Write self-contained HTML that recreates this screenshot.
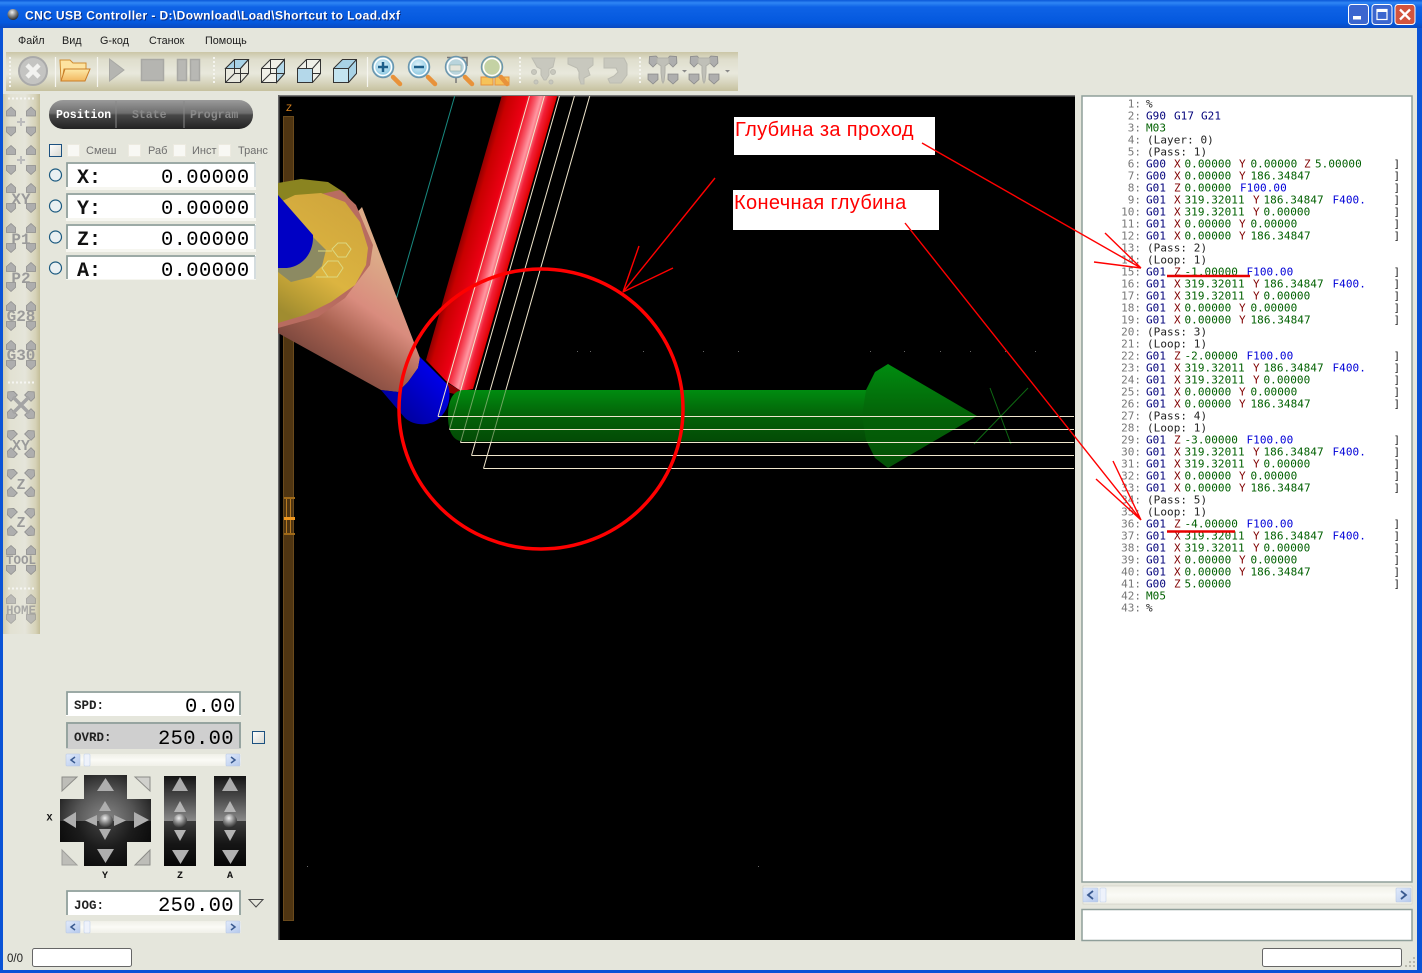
<!DOCTYPE html>
<html><head><meta charset="utf-8"><style>
html,body{margin:0;padding:0;background:#e5e6dc;overflow:hidden}
svg{display:block;position:absolute;left:0;top:0}
text{font-family:"Liberation Sans",sans-serif}
.m{font-size:10.800px;fill:#1c1c1c}
.l{font-size:11px;fill:#6e6e6e}
.code text{font-family:"DejaVu Sans Mono","Liberation Mono",monospace;font-size:11px;letter-spacing:.06px}
.nums text{font-family:"DejaVu Sans Mono","Liberation Mono",monospace;font-size:11px;fill:#777;text-anchor:end}
.g{fill:#00007a}.r{fill:#800000}.v{fill:#006000}.f{fill:#0000d8}.c{fill:#222}
.bk text{font-family:"DejaVu Sans Mono","Liberation Mono",monospace;font-size:11px;fill:#222}
.dro{font-family:"Liberation Mono",monospace;font-size:20.500px;fill:#000;letter-spacing:.35px}
.drl{font-family:"Liberation Mono",monospace;font-size:20px;font-weight:bold;fill:#111}
.sl{font-family:"Liberation Mono",monospace;font-size:12.500px;font-weight:bold;fill:#222}
.tab{font-family:"Liberation Mono",monospace;font-size:11.500px;font-weight:bold}
.anno{font-size:20px;fill:#f00;letter-spacing:.36px}
.ic{font-family:"Liberation Mono",monospace;font-weight:bold;font-size:16px;fill:#9a9a9a;text-anchor:middle}
.pl{font-family:"Liberation Mono",monospace;font-weight:bold;font-size:10px;fill:#111;text-anchor:middle}
</style></head><body>
<svg width="1422" height="973" viewBox="0 0 1422 973" xmlns="http://www.w3.org/2000/svg">
<defs>
<linearGradient id="tb" x1="0" y1="0" x2="0" y2="1"><stop offset="0" stop-color="#0a57d8"/><stop offset=".1" stop-color="#2f86f4"/><stop offset=".25" stop-color="#0f63e6"/><stop offset=".8" stop-color="#0458de"/><stop offset="1" stop-color="#0a49c0"/></linearGradient>
<linearGradient id="tool" x1="0" y1="0" x2="0" y2="1"><stop offset="0" stop-color="#cbc6a6"/><stop offset=".2" stop-color="#dfdecd"/><stop offset=".55" stop-color="#e8e8dc"/><stop offset=".8" stop-color="#d6d3bb"/><stop offset="1" stop-color="#c6c19e"/></linearGradient>
<linearGradient id="side" x1="0" y1="0" x2="1" y2="0"><stop offset="0" stop-color="#cfcbae"/><stop offset=".2" stop-color="#e2e1d2"/><stop offset=".6" stop-color="#e5e5da"/><stop offset=".88" stop-color="#d6d2b8"/><stop offset="1" stop-color="#c3bd98"/></linearGradient>
<linearGradient id="pill" x1="0" y1="0" x2="0" y2="1"><stop offset="0" stop-color="#9a9a9a"/><stop offset=".45" stop-color="#6e6e6e"/><stop offset=".52" stop-color="#484848"/><stop offset="1" stop-color="#222"/></linearGradient>
<linearGradient id="boxg" x1="0" y1="0" x2="1" y2="1"><stop offset="0" stop-color="#fff"/><stop offset="1" stop-color="#d8d8d0"/></linearGradient>
<radialGradient id="padT" gradientUnits="userSpaceOnUse" cx="105" cy="821" r="55"><stop offset="0" stop-color="#8a8a8a"/><stop offset=".55" stop-color="#555"/><stop offset="1" stop-color="#1a1a1a"/></radialGradient>
<radialGradient id="padB" gradientUnits="userSpaceOnUse" cx="105" cy="821" r="55"><stop offset="0" stop-color="#444"/><stop offset=".5" stop-color="#1c1c1c"/><stop offset="1" stop-color="#080808"/></radialGradient>
<linearGradient id="vT" gradientUnits="userSpaceOnUse" x1="0" y1="-45" x2="0" y2="0"><stop offset="0" stop-color="#141414"/><stop offset=".5" stop-color="#4c4c4c"/><stop offset="1" stop-color="#8a8a8a"/></linearGradient>
<linearGradient id="vB" gradientUnits="userSpaceOnUse" x1="0" y1="0" x2="0" y2="45"><stop offset="0" stop-color="#3c3c3c"/><stop offset=".5" stop-color="#161616"/><stop offset="1" stop-color="#060606"/></linearGradient>
<radialGradient id="ball" cx=".42" cy=".3" r=".7"><stop offset="0" stop-color="#f0f0f0"/><stop offset=".5" stop-color="#888"/><stop offset="1" stop-color="#2a2a2a"/></radialGradient>
<linearGradient id="redc" gradientUnits="userSpaceOnUse" x1="502" y1="95" x2="553" y2="109.600"><stop offset="0" stop-color="#900000"/><stop offset=".12" stop-color="#c80000"/><stop offset=".45" stop-color="#ec0014"/><stop offset=".62" stop-color="#f85868"/><stop offset=".72" stop-color="#ff98a2"/><stop offset=".85" stop-color="#f22038"/><stop offset="1" stop-color="#e00000"/></linearGradient>
<linearGradient id="cone" gradientUnits="userSpaceOnUse" x1="395" y1="268" x2="325" y2="368"><stop offset="0" stop-color="#dcab88"/><stop offset=".4" stop-color="#d98c7e"/><stop offset=".7" stop-color="#a6604f"/><stop offset="1" stop-color="#7c483e"/></linearGradient>
<linearGradient id="yel" x1=".7" y1="0" x2=".25" y2="1"><stop offset="0" stop-color="#cfa53c"/><stop offset=".6" stop-color="#dcb440"/><stop offset=".85" stop-color="#b89c34"/><stop offset="1" stop-color="#a08c30"/></linearGradient>
<linearGradient id="blu" gradientUnits="userSpaceOnUse" x1="434" y1="372" x2="396" y2="410"><stop offset="0" stop-color="#0000e8"/><stop offset="1" stop-color="#0000a0"/></linearGradient>
<linearGradient id="grn" x1="0" y1="0" x2="0" y2="1"><stop offset="0" stop-color="#008c10"/><stop offset=".5" stop-color="#046208"/><stop offset="1" stop-color="#034a06"/></linearGradient>
<linearGradient id="grn2" gradientUnits="userSpaceOnUse" x1="0" y1="364" x2="0" y2="468"><stop offset="0" stop-color="#008c10"/><stop offset=".5" stop-color="#046208"/><stop offset="1" stop-color="#045006"/></linearGradient>
<linearGradient id="sb" x1="0" y1="0" x2="0" y2="1"><stop offset="0" stop-color="#f0f0e8"/><stop offset=".5" stop-color="#fbfbf6"/><stop offset="1" stop-color="#f0f0e8"/></linearGradient>
<linearGradient id="sbb" x1="0" y1="0" x2="1" y2="1"><stop offset="0" stop-color="#e2ebfb"/><stop offset="1" stop-color="#b4c8ec"/></linearGradient>
<radialGradient id="lens" cx=".45" cy=".4" r=".6"><stop offset="0" stop-color="#dff2fb"/><stop offset="1" stop-color="#7cc0dc"/></radialGradient>
<linearGradient id="fold" x1="0" y1="0" x2="0" y2="1"><stop offset="0" stop-color="#fde9a8"/><stop offset="1" stop-color="#f2b860"/></linearGradient>
<clipPath id="vp"><rect x="278" y="96" width="797" height="844"/></clipPath>
<g id="pent"><path d="M-4.500 -.5L0 -4.500L4.500 -.5V4.500H-4.500Z" fill="#aeaeae" stroke="#8e8e8e" stroke-width=".8"/></g>
<g id="arr4"><use href="#pent" x="-10" y="-10"/><use href="#pent" x="10" y="-10"/><use href="#pent" transform="translate(-10 10) rotate(180)"/><use href="#pent" transform="translate(10 10) rotate(180)"/></g>
<g id="arrX"><use href="#pent" transform="translate(-10 -10) rotate(-45)"/><use href="#pent" transform="translate(10 -10) rotate(45)"/><use href="#pent" transform="translate(-10 10) rotate(-135)"/><use href="#pent" transform="translate(10 10) rotate(135)"/></g>
<g id="sbh"><rect x="0" y="0" width="175" height="12" fill="url(#sb)"/><rect x="0" y="0" width="14" height="12" rx="1" fill="url(#sbb)" stroke="#b8c8e4" stroke-width=".6"/><path d="M9 3L5 6L9 9" fill="none" stroke="#3a5a90" stroke-width="1.500"/><rect x="18" y="0" width="6" height="12" rx="1" fill="#eef2fb" stroke="#c2d0ea" stroke-width=".6"/><rect x="160" y="0" width="14" height="12" rx="1" fill="url(#sbb)" stroke="#b8c8e4" stroke-width=".6"/><path d="M165 3L169 6L165 9" fill="none" stroke="#3a5a90" stroke-width="1.500"/></g>
<g id="vpad"><rect x="-16" y="-45" width="32" height="45" fill="url(#vT)"/><rect x="-16" y="0" width="32" height="45" fill="url(#vB)"/><path d="M-8 -30H8L0 -44Z" fill="#aaa"/><path d="M-8 29H9L.5 43Z" fill="#b0b0b0"/><path d="M-6 -9H6L0 -20Z" fill="#b4b4b4"/><path d="M-6 9H6L0 20Z" fill="#b4b4b4"/><circle r="7" fill="url(#ball)"/></g>
<g id="spin"><use href="#pent" transform="translate(5 5) rotate(-45) scale(1.100)"/><use href="#pent" transform="translate(25 5) rotate(45) scale(1.100)"/><use href="#pent" transform="translate(5 24) rotate(180) scale(1.100)"/><use href="#pent" transform="translate(25 24) rotate(180) scale(1.100)"/><path d="M9 3H21V8L17 11V18L16 26L15 28L14 26L13 18V11L9 8Z" fill="#c0c0b8" stroke="#b0b0a8"/></g>
</defs>

<!-- window frame -->
<rect x="0" y="0" width="1422" height="973" fill="#0a53d6"/>
<rect x="0" y="0" width="1422" height="28" fill="url(#tb)"/>
<rect x="3" y="28" width="1414" height="942" fill="#e5e6dc"/>
<circle cx="13" cy="14.500" r="5.500" fill="url(#ball)"/>
<text x="25" y="19.500" font-size="12" font-weight="bold" fill="#0a2c80" transform="translate(1 1)" textLength="375">CNC USB Controller - D:\Download\Load\Shortcut to Load.dxf</text>
<text x="25" y="19.500" font-size="12" font-weight="bold" fill="#fff" textLength="375">CNC USB Controller - D:\Download\Load\Shortcut to Load.dxf</text>
<g stroke="#fff" stroke-width="1">
<rect x="1348.500" y="4.500" width="20" height="20" rx="3" fill="#3b66cf"/>
<rect x="1372" y="4.500" width="20" height="20" rx="3" fill="#3b66cf"/>
<rect x="1395" y="4.500" width="20" height="20" rx="3" fill="#d2543e"/>
</g>
<rect x="1353" y="16" width="8" height="3.500" fill="#fff"/>
<rect x="1377" y="9.500" width="10" height="10" fill="none" stroke="#fff" stroke-width="1.200"/><rect x="1377" y="9" width="10" height="3" fill="#fff"/>
<path d="M1400 9.500L1410 19.500M1410 9.500L1400 19.500" stroke="#fff" stroke-width="2.300"/>

<!-- menu -->
<text class="m" x="18" y="44">Файл</text><text class="m" x="62" y="44">Вид</text><text class="m" x="100" y="44">G-код</text><text class="m" x="149" y="44">Станок</text><text class="m" x="205" y="44">Помощь</text>

<!-- top toolbar -->
<rect x="6" y="52" width="732" height="39" fill="url(#tool)"/>
<path d="M10 57v30M214 57v26M520 57v26M640 57v26" stroke="#f4f4ee" stroke-width="2" stroke-dasharray="2 2"/>
<path d="M55.500 57v30M97.500 57v30M367.500 57v30" stroke="#f6f6f0" stroke-width="1.200"/>
<circle cx="33" cy="71" r="14" fill="#c4c4c2" stroke="#aaa" stroke-width="2"/>
<path d="M27 65L39 77M39 65L27 77" stroke="#f2f2f0" stroke-width="4.500"/>
<path d="M60 60h10l3 3h13v6H64l-2 12h-1z" fill="#fde3a0" stroke="#d08c30"/>
<path d="M61 81L65 69H90L85 81Z" fill="url(#fold)" stroke="#c97d28"/>
<path d="M109.500 59L124 70L109.500 81Z" fill="#b5b5b1" stroke="#a8a8a4"/>
<rect x="141.500" y="59.500" width="22" height="21" fill="#b5b5b1" stroke="#a8a8a4" stroke-width="1.500"/>
<rect x="177.500" y="59.500" width="9" height="21" fill="#b8b8b4" stroke="#a8a8a4" stroke-width="1.500"/>
<rect x="190.500" y="59.500" width="9" height="21" fill="#b8b8b4" stroke="#a8a8a4" stroke-width="1.500"/>
<!-- cubes -->
<g stroke="#333" stroke-width="1" fill="none">
<path d="M225.500 68.500L234.500 59.500H248.500V73.500L240.500 82.500H225.500Z" fill="#e8e8de"/><path d="M225.500 68.500L234.500 59.500H248.500L240.500 68.500Z" fill="#a8d2e6"/><path d="M225.500 68.500H240.500V82.500M240.500 68.500L248.500 59.500M234.500 59.500V73.500H248.500M234.500 73.500L225.500 82.500" />
<path d="M261.500 68.500L270.500 59.500H284.500V73.500L276.500 82.500H261.500Z" fill="#f0f0e8"/><path d="M276.500 68.500L284.500 59.500V73.500L276.500 82.500Z" fill="#b4d8ea"/><path d="M261.500 68.500H276.500V82.500M276.500 68.500L284.500 59.500M270.500 59.500V73.500H284.500M270.500 73.500L261.500 82.500"/>
<path d="M297.500 68.500L306.500 59.500H320.500V73.500L312.500 82.500H297.500Z" fill="#f0f0e8"/><path d="M297.500 68.500H312.500V82.500H297.500Z" fill="#b4d8ea"/><path d="M312.500 68.500L320.500 59.500M306.500 59.500V68.500M312.500 73.500H320.500"/>
<path d="M333.500 68.500L342.500 59.500H356.500V73.500L348.500 82.500H333.500Z" fill="#a8d2e6"/><path d="M333.500 68.500H348.500V82.500H333.500Z" fill="#c4e4f0"/><path d="M348.500 68.500L356.500 59.500"/>
</g>
<!-- magnifiers -->
<g>
<path d="M393 77L400 84" stroke="#e8923a" stroke-width="4.500" stroke-linecap="round"/>
<circle cx="383" cy="67" r="10.500" fill="url(#lens)" stroke="#6b95ad" stroke-width="1.500"/><circle cx="383" cy="67" r="8.500" fill="none" stroke="#fff" stroke-width="1.500"/>
<path d="M378 67H388M383 62V72" stroke="#1d5f8a" stroke-width="2.500"/>
<path d="M428 77L435 84" stroke="#e8923a" stroke-width="4.500" stroke-linecap="round"/>
<circle cx="419" cy="67" r="10.500" fill="url(#lens)" stroke="#6b95ad" stroke-width="1.500"/><circle cx="419" cy="67" r="8.500" fill="none" stroke="#fff" stroke-width="1.500"/>
<path d="M414 67H424" stroke="#1d5f8a" stroke-width="2.500"/>
<path d="M447 57.500H467V66M456 78V83" stroke="#777" stroke-width="1.500" fill="none"/>
<path d="M465 77L472 84" stroke="#e8923a" stroke-width="4.500" stroke-linecap="round"/>
<circle cx="456" cy="67" r="10.500" fill="#b9d4dc" stroke="#6b95ad" stroke-width="1.500"/><circle cx="456" cy="67" r="8.500" fill="none" stroke="#fff" stroke-width="1.500"/>
<rect x="450" y="65" width="11" height="6" fill="#e5e5da" stroke="#8aa" stroke-width=".6"/>
<rect x="481" y="77" width="12" height="8" fill="#f6c35a" stroke="#e8923a"/><rect x="495" y="77" width="14" height="8" fill="#f6c35a" stroke="#e8923a"/><rect x="490" y="56" width="6" height="3" fill="#e8923a"/>
<path d="M501 77L507 84" stroke="#e8923a" stroke-width="4.500" stroke-linecap="round"/>
<circle cx="492" cy="67" r="10.500" fill="#c4d2a4" stroke="#6b95ad" stroke-width="1.500"/><circle cx="492" cy="67" r="8.500" fill="none" stroke="#fff" stroke-width="1.500"/>
</g>
<!-- disabled tools -->
<g fill="#c8c8be" stroke="#bcbcb2" stroke-width="1">
<path d="M532 58h23l-2 9-4 2v6l-3 5-2 0-3-5v-6l-4-2z"/><circle cx="534" cy="72" r="2.500"/><circle cx="553" cy="72" r="2.500"/><circle cx="536" cy="82" r="2"/><circle cx="551" cy="82" r="2"/>
<path d="M568 58h25v7l-5 4 2 6-6 3v6h-3l-2-6v-6l-2-4-9-4z"/>
<path d="M604 58h20l3 6v11l-6 8h-11l-2-4 6-3 4-4-2-4h-12z"/>
</g>
<use href="#spin" x="648" y="55"/>
<use href="#spin" x="689" y="55"/>
<path d="M682 70h5l-2.500 2.500zM725 70h5l-2.500 2.500z" fill="#888"/>

<!-- left vertical toolbar -->
<rect x="3" y="94" width="37" height="540" fill="url(#side)"/>
<path d="M8 98.500H34M8 382.500H34M8 588.500H34" stroke="#f6f6f2" stroke-width="2" stroke-dasharray="2 2"/>
<use href="#arr4" x="21" y="121.500"/><path d="M17 122h8M21 118v8" stroke="#bbb" stroke-width="2"/>
<use href="#arr4" x="21" y="160"/><path d="M17 160h8M21 156v8" stroke="#bbb" stroke-width="2"/>
<use href="#arr4" x="21" y="198"/><text class="ic" x="21" y="204">XY</text>
<use href="#arr4" x="21" y="238"/><text class="ic" x="21" y="244">P1</text>
<use href="#arr4" x="21" y="277"/><text class="ic" x="21" y="283">P2</text>
<use href="#arr4" x="21" y="316"/><text class="ic" x="21" y="321">G28</text>
<use href="#arr4" x="21" y="355"/><text class="ic" x="21" y="360">G30</text>
<use href="#arrX" x="21" y="405"/><path d="M13 397L29 413M29 397L13 413" stroke="#a4a4a4" stroke-width="3.500"/>
<use href="#arrX" x="21" y="444"/><text class="ic" x="21" y="450" style="font-size:15px">XY</text>
<use href="#arrX" x="21" y="483"/><text class="ic" x="21" y="489" style="font-size:15px">Z</text>
<use href="#arrX" x="21" y="522"/><text class="ic" x="21" y="527" style="font-size:15px">Z</text>
<use href="#arr4" x="21" y="560"/><text class="ic" x="21" y="564" style="font-size:12.500px">TOOL</text>
<use href="#arr4" x="21" y="609" opacity=".75"/><text class="ic" x="21" y="614" style="font-size:12.500px" opacity=".8">HOME</text>

<!-- tabs -->
<rect x="49" y="100" width="204" height="29" rx="14" fill="url(#pill)"/>
<path d="M116 101v27M184 101v27" stroke="#888" stroke-width="1"/>
<text class="tab" x="56" y="118" fill="#fff">Position</text>
<text class="tab" x="132" y="118" fill="#8a8a8a">State</text>
<text class="tab" x="190" y="118" fill="#8a8a8a">Program</text>

<!-- checks -->
<rect x="49.500" y="144.500" width="12" height="12" fill="url(#boxg)" stroke="#1c5180"/>
<g fill="#f8f8f4" stroke="#eceae0"><rect x="67.500" y="144.500" width="12" height="12"/><rect x="128.500" y="144.500" width="12" height="12"/><rect x="173.500" y="144.500" width="12" height="12"/><rect x="218.500" y="144.500" width="12" height="12"/></g>
<text class="l" x="86" y="154">Смеш</text><text class="l" x="148" y="154">Раб</text><text class="l" x="192" y="154">Инст</text><text class="l" x="238" y="154">Транс</text>

<!-- DRO -->
<g fill="#eaf0f2" stroke="#1c5a80" stroke-width="1.200"><circle cx="55.500" cy="175" r="6"/><circle cx="55.500" cy="206" r="6"/><circle cx="55.500" cy="237" r="6"/><circle cx="55.500" cy="268" r="6"/></g>
<g>
<rect x="66" y="162" width="190" height="28" fill="#f6f6f0"/><rect x="66" y="162" width="190" height="25" fill="#fff"/><path d="M67 187V163H255" fill="none" stroke="#8f9f9a" stroke-width="1.800"/><path d="M255 163V187" stroke="#a8b8bc"/>
<rect x="66" y="193" width="190" height="28" fill="#f6f6f0"/><rect x="66" y="193" width="190" height="25" fill="#fff"/><path d="M67 218V194H255" fill="none" stroke="#8f9f9a" stroke-width="1.800"/><path d="M255 194V218" stroke="#a8b8bc"/>
<rect x="66" y="224" width="190" height="28" fill="#f6f6f0"/><rect x="66" y="224" width="190" height="25" fill="#fff"/><path d="M67 249V225H255" fill="none" stroke="#8f9f9a" stroke-width="1.800"/><path d="M255 225V249" stroke="#a8b8bc"/>
<rect x="66" y="255" width="190" height="25" fill="#f6f6f0"/><rect x="66" y="255" width="190" height="24" fill="#fff"/><path d="M67 279V256H255" fill="none" stroke="#8f9f9a" stroke-width="1.800"/><path d="M255 256V279" stroke="#a8b8bc"/>
</g>
<text class="drl" x="77" y="183">X:</text><text class="dro" x="161" y="183">0.00000</text>
<text class="drl" x="77" y="214">Y:</text><text class="dro" x="161" y="214">0.00000</text>
<text class="drl" x="77" y="245">Z:</text><text class="dro" x="161" y="245">0.00000</text>
<text class="drl" x="77" y="276">A:</text><text class="dro" x="161" y="276">0.00000</text>

<!-- speed -->
<rect x="66" y="691" width="175" height="25" fill="#fff"/><path d="M67 715V692H240V715" fill="none" stroke="#8f9f9a" stroke-width="1.800"/>
<text class="sl" x="74" y="709">SPD:</text><text class="dro" x="185" y="712">0.00</text>
<rect x="66" y="722" width="175" height="27" fill="#cfcfcf"/><path d="M67 748V723H240V748" fill="none" stroke="#8f9f9a" stroke-width="1.800"/>
<text class="sl" x="74" y="741">OVRD:</text><text class="dro" x="158" y="744">250.00</text>
<rect x="252.500" y="731.500" width="12" height="12" fill="url(#boxg)" stroke="#1c5180"/>
<use href="#sbh" x="66" y="754"/>

<!-- jog pad -->
<path d="M84 775H127V799H151V821H60V799H84Z" fill="url(#padT)"/>
<path d="M60 821H151V842H127V866H84V842H60Z" fill="url(#padB)"/>
<g fill="#aeaeae">
<path d="M97 791H114L105.500 778Z"/><path d="M97 849H114L105.500 863Z"/><path d="M76 812V828L63 820Z"/><path d="M134 812V828L149 820Z"/>
<path d="M99 811H111L105 801Z"/><path d="M99 829H111L105 840Z"/><path d="M97 815V826L85 820.500Z"/><path d="M114 815V826L126 820.500Z"/>
</g>
<circle cx="106" cy="821" r="7" fill="url(#ball)"/>
<path d="M62 777H77L62 791Z" fill="#bdbdb8" stroke="#8c8c88"/><path d="M135 777H150V791Z" fill="#d0d0cc" stroke="#8c8c88"/><path d="M62 850L77 865H62Z" fill="#bdbdb8" stroke="#a0a09c"/><path d="M150 850V865H135Z" fill="#bdbdb8" stroke="#8c8c88"/>
<use href="#vpad" x="180" y="821"/><use href="#vpad" x="230" y="821"/>
<text class="pl" x="49.500" y="820.500">X</text><text class="pl" x="105" y="878">Y</text><text class="pl" x="180" y="878">Z</text><text class="pl" x="230" y="878">A</text>

<rect x="66" y="890" width="175" height="25" fill="#fff"/><path d="M67 915V891H240V915" fill="none" stroke="#8f9f9a" stroke-width="1.800"/>
<text class="sl" x="74" y="909">JOG:</text><text class="dro" x="158" y="911">250.00</text>
<path d="M249 899.500H263L256 907Z" fill="#e5e6dc" stroke="#444"/>
<use href="#sbh" x="66" y="921"/>

<!-- viewport -->
<rect x="278" y="95" width="797" height="845" fill="#000"/>
<rect x="278" y="95" width="797" height="1.500" fill="#777"/>
<rect x="278" y="95" width="1.500" height="845" fill="#666"/>
<g clip-path="url(#vp)">
<text x="286" y="111" font-size="10" fill="#e08820" style="font-family:'Liberation Mono',monospace">Z</text>
<rect x="283.500" y="116.500" width="10" height="804" fill="#4f3512" stroke="#6a4a1c"/>
<path d="M286.500 498V534M290.500 498V534" stroke="#b87a20" stroke-width="1"/>
<rect x="284" y="497" width="11" height="2" fill="#a06a18"/><rect x="284" y="533" width="11" height="2" fill="#a06a18"/>
<rect x="284" y="517" width="11" height="3" fill="#f09820"/>
<path d="M455 95L381 352" stroke="#188a80" stroke-width="1"/>
<!-- red cylinder -->
<path d="M502 95H557.500L473 389L461 391L446 381L426 360Z" fill="url(#redc)"/>
<path d="M446 382L461 391L459 395L446 392Z" fill="#8c0000"/>
<!-- tool -->
<path d="M278 183L301 179L328 182L345 193L354 205L345 225H278Z" fill="#8a8420"/>
<path d="M362 207L420 358L418 368L408 382L398 392L381 390L278 333V300Z" fill="url(#cone)"/>
<path d="M278 203L340 190L356 205L373 245L370 265L345 298L318 317L278 328Z" fill="#b86c60"/>
<path d="M278 203L295 195L321 193L345 202L360 222L368 248L366 265L355 285L331 302L305 315L278 323Z" fill="url(#yel)"/>
<path d="M308 232L326 250L322 266L311 277L291 282L278 272V200Z" fill="#8c8a62"/>
<path d="M278 195L313 235C314 255 300 268 285 268H278Z" fill="#0000c4"/>
<g fill="none" stroke="#dcd880" stroke-width="1"><path d="M332 249L338 243H346L351 249L346 257H338Z"/><path d="M322 268L328 261H338L343 268L337 277H328Z"/><path d="M318 251H332M316 277H328"/></g>
<!-- blue tip -->
<path d="M420 357L448 385C452 398 448 412 437 420C428 426 414 426 405 418L381 390L398 392L408 382L418 368Z" fill="url(#blu)"/>
<!-- wires behind green tips -->
<g fill="none" stroke="#f0e6cc" stroke-width="1">
<path d="M529.700 95L438 416.500"/><path d="M544.700 95L449.500 429.500"/><path d="M559.700 95L460.500 442.500"/>
<path d="M574.700 95L471.500 455.500"/><path d="M590 95L483.500 468.500"/>
</g>
<!-- green -->
<path d="M464 390H868V441.500H464C452 441.500 448 430 448 416C448 402 452 390 464 390Z" fill="url(#grn)"/>
<path d="M866 390L875 372L888 364L977 416L888 468L875 458L866 440L862 416Z" fill="url(#grn2)"/>
<path d="M990 388L1011 444M1028 388L974 444" stroke="#0e6a12" stroke-width="1"/>
<g fill="none" stroke="#c8d0a8" stroke-width="1" opacity=".55">
<path d="M460.700 390L449.500 429.500M475.500 390L460.800 441.500M490.200 390L475.500 441.500M505.900 390L491.200 441.500"/>
</g>
<g fill="none" stroke="#f0e6cc" stroke-width="1">
<path d="M438 416.500H1074M449.500 429.500H1074M460.500 442.500H1074M471.500 455.500H1074M483.500 468.500H1074"/>
</g>
<g fill="#666"><rect x="577" y="351" width="1" height="1"/><rect x="590" y="351" width="1" height="1"/><rect x="643" y="351" width="1" height="1"/><rect x="703" y="351" width="1" height="1"/><rect x="738" y="351" width="1" height="1"/><rect x="870" y="351" width="1" height="1"/><rect x="904" y="351" width="1" height="1"/><rect x="940" y="351" width="1" height="1"/><rect x="970" y="351" width="1" height="1"/><rect x="1005" y="351" width="1" height="1"/><rect x="1035" y="351" width="1" height="1"/><rect x="307" y="866" width="1" height="1"/><rect x="758" y="866" width="1" height="1"/></g>
<ellipse cx="541" cy="409" rx="142" ry="140" fill="none" stroke="#f00" stroke-width="3.500"/>
</g>

<!-- right panel -->
<rect x="1082" y="96" width="330" height="786" fill="#fff" stroke="#8f9f9a" stroke-width="1.500"/>
<rect x="1083" y="886" width="329" height="18" fill="url(#sb)" stroke="#c8c8be" stroke-width=".5"/>
<rect x="1083" y="888" width="15" height="14" rx="1" fill="url(#sbb)" stroke="#b8c8e4" stroke-width=".6"/><path d="M1093 891L1088 895L1093 899" fill="none" stroke="#3a5a90" stroke-width="1.800"/>
<rect x="1100" y="888" width="6" height="14" rx="1" fill="#eef2fb" stroke="#c2d0ea" stroke-width=".6"/>
<rect x="1396" y="888" width="15" height="14" rx="1" fill="url(#sbb)" stroke="#b8c8e4" stroke-width=".6"/><path d="M1401 891L1406 895L1401 899" fill="none" stroke="#3a5a90" stroke-width="1.800"/>
<rect x="1082" y="909.500" width="330" height="31" fill="#fff" stroke="#8f9f9a" stroke-width="1.500"/>

<g class="nums">
<text x="1141" y="107.500">1:</text><text x="1141" y="119.500">2:</text><text x="1141" y="131.500">3:</text><text x="1141" y="143.500">4:</text><text x="1141" y="155.500">5:</text><text x="1141" y="167.500">6:</text><text x="1141" y="179.500">7:</text><text x="1141" y="191.500">8:</text><text x="1141" y="203.500">9:</text><text x="1141" y="215.500">10:</text><text x="1141" y="227.500">11:</text><text x="1141" y="239.500">12:</text><text x="1141" y="251.500">13:</text><text x="1141" y="263.500">14:</text><text x="1141" y="275.500">15:</text><text x="1141" y="287.500">16:</text><text x="1141" y="299.500">17:</text><text x="1141" y="311.500">18:</text><text x="1141" y="323.500">19:</text><text x="1141" y="335.500">20:</text><text x="1141" y="347.500">21:</text><text x="1141" y="359.500">22:</text><text x="1141" y="371.500">23:</text><text x="1141" y="383.500">24:</text><text x="1141" y="395.500">25:</text><text x="1141" y="407.500">26:</text><text x="1141" y="419.500">27:</text><text x="1141" y="431.500">28:</text><text x="1141" y="443.500">29:</text><text x="1141" y="455.500">30:</text><text x="1141" y="467.500">31:</text><text x="1141" y="479.500">32:</text><text x="1141" y="491.500">33:</text><text x="1141" y="503.500">34:</text><text x="1141" y="515.500">35:</text><text x="1141" y="527.500">36:</text><text x="1141" y="539.500">37:</text><text x="1141" y="551.500">38:</text><text x="1141" y="563.500">39:</text><text x="1141" y="575.500">40:</text><text x="1141" y="587.500">41:</text><text x="1141" y="599.500">42:</text><text x="1141" y="611.500">43:</text>
</g>
<g class="code">
<text y="107.500" class="c"><tspan x="1146">%</tspan></text>
<text y="119.500" class="g"><tspan x="1146">G90</tspan><tspan x="1174">G17</tspan><tspan x="1201">G21</tspan></text>
<text y="131.500" class="v"><tspan x="1146">M03</tspan></text>
<text y="143.500" class="c"><tspan x="1147">(Layer: 0)</tspan></text>
<text y="155.500" class="c"><tspan x="1147">(Pass: 1)</tspan></text>
<text y="167.500"><tspan x="1146" class="g">G00</tspan><tspan x="1174" class="r">X</tspan><tspan x="1184.500" class="v">0.00000</tspan><tspan x="1239" class="r">Y</tspan><tspan x="1250.500" class="v">0.00000</tspan><tspan x="1304" class="r">Z</tspan><tspan x="1315" class="v">5.00000</tspan></text>
<text y="179.500"><tspan x="1146" class="g">G00</tspan><tspan x="1174" class="r">X</tspan><tspan x="1184.500" class="v">0.00000</tspan><tspan x="1239" class="r">Y</tspan><tspan x="1250.500" class="v">186.34847</tspan></text>
<text y="191.500"><tspan x="1146" class="g">G01</tspan><tspan x="1174" class="r">Z</tspan><tspan x="1184.500" class="v">0.00000</tspan><tspan x="1240" class="f">F100.00</tspan></text>
<text y="203.500"><tspan x="1146" class="g">G01</tspan><tspan x="1174" class="r">X</tspan><tspan x="1184.500" class="v">319.32011</tspan><tspan x="1253" class="r">Y</tspan><tspan x="1263.500" class="v">186.34847</tspan><tspan x="1332.500" class="f">F400.</tspan></text>
<text y="215.500"><tspan x="1146" class="g">G01</tspan><tspan x="1174" class="r">X</tspan><tspan x="1184.500" class="v">319.32011</tspan><tspan x="1253" class="r">Y</tspan><tspan x="1263.500" class="v">0.00000</tspan></text>
<text y="227.500"><tspan x="1146" class="g">G01</tspan><tspan x="1174" class="r">X</tspan><tspan x="1184.500" class="v">0.00000</tspan><tspan x="1239" class="r">Y</tspan><tspan x="1250.500" class="v">0.00000</tspan></text>
<text y="239.500"><tspan x="1146" class="g">G01</tspan><tspan x="1174" class="r">X</tspan><tspan x="1184.500" class="v">0.00000</tspan><tspan x="1239" class="r">Y</tspan><tspan x="1250.500" class="v">186.34847</tspan></text>
<text y="251.500" class="c"><tspan x="1147">(Pass: 2)</tspan></text>
<text y="263.500" class="c"><tspan x="1147">(Loop: 1)</tspan></text>
<text y="275.500"><tspan x="1146" class="g">G01</tspan><tspan x="1174" class="r">Z</tspan><tspan x="1184.500" class="v">-1.00000</tspan><tspan x="1246.500" class="f">F100.00</tspan></text>
<text y="287.500"><tspan x="1146" class="g">G01</tspan><tspan x="1174" class="r">X</tspan><tspan x="1184.500" class="v">319.32011</tspan><tspan x="1253" class="r">Y</tspan><tspan x="1263.500" class="v">186.34847</tspan><tspan x="1332.500" class="f">F400.</tspan></text>
<text y="299.500"><tspan x="1146" class="g">G01</tspan><tspan x="1174" class="r">X</tspan><tspan x="1184.500" class="v">319.32011</tspan><tspan x="1253" class="r">Y</tspan><tspan x="1263.500" class="v">0.00000</tspan></text>
<text y="311.500"><tspan x="1146" class="g">G01</tspan><tspan x="1174" class="r">X</tspan><tspan x="1184.500" class="v">0.00000</tspan><tspan x="1239" class="r">Y</tspan><tspan x="1250.500" class="v">0.00000</tspan></text>
<text y="323.500"><tspan x="1146" class="g">G01</tspan><tspan x="1174" class="r">X</tspan><tspan x="1184.500" class="v">0.00000</tspan><tspan x="1239" class="r">Y</tspan><tspan x="1250.500" class="v">186.34847</tspan></text>
<text y="335.500" class="c"><tspan x="1147">(Pass: 3)</tspan></text>
<text y="347.500" class="c"><tspan x="1147">(Loop: 1)</tspan></text>
<text y="359.500"><tspan x="1146" class="g">G01</tspan><tspan x="1174" class="r">Z</tspan><tspan x="1184.500" class="v">-2.00000</tspan><tspan x="1246.500" class="f">F100.00</tspan></text>
<text y="371.500"><tspan x="1146" class="g">G01</tspan><tspan x="1174" class="r">X</tspan><tspan x="1184.500" class="v">319.32011</tspan><tspan x="1253" class="r">Y</tspan><tspan x="1263.500" class="v">186.34847</tspan><tspan x="1332.500" class="f">F400.</tspan></text>
<text y="383.500"><tspan x="1146" class="g">G01</tspan><tspan x="1174" class="r">X</tspan><tspan x="1184.500" class="v">319.32011</tspan><tspan x="1253" class="r">Y</tspan><tspan x="1263.500" class="v">0.00000</tspan></text>
<text y="395.500"><tspan x="1146" class="g">G01</tspan><tspan x="1174" class="r">X</tspan><tspan x="1184.500" class="v">0.00000</tspan><tspan x="1239" class="r">Y</tspan><tspan x="1250.500" class="v">0.00000</tspan></text>
<text y="407.500"><tspan x="1146" class="g">G01</tspan><tspan x="1174" class="r">X</tspan><tspan x="1184.500" class="v">0.00000</tspan><tspan x="1239" class="r">Y</tspan><tspan x="1250.500" class="v">186.34847</tspan></text>
<text y="419.500" class="c"><tspan x="1147">(Pass: 4)</tspan></text>
<text y="431.500" class="c"><tspan x="1147">(Loop: 1)</tspan></text>
<text y="443.500"><tspan x="1146" class="g">G01</tspan><tspan x="1174" class="r">Z</tspan><tspan x="1184.500" class="v">-3.00000</tspan><tspan x="1246.500" class="f">F100.00</tspan></text>
<text y="455.500"><tspan x="1146" class="g">G01</tspan><tspan x="1174" class="r">X</tspan><tspan x="1184.500" class="v">319.32011</tspan><tspan x="1253" class="r">Y</tspan><tspan x="1263.500" class="v">186.34847</tspan><tspan x="1332.500" class="f">F400.</tspan></text>
<text y="467.500"><tspan x="1146" class="g">G01</tspan><tspan x="1174" class="r">X</tspan><tspan x="1184.500" class="v">319.32011</tspan><tspan x="1253" class="r">Y</tspan><tspan x="1263.500" class="v">0.00000</tspan></text>
<text y="479.500"><tspan x="1146" class="g">G01</tspan><tspan x="1174" class="r">X</tspan><tspan x="1184.500" class="v">0.00000</tspan><tspan x="1239" class="r">Y</tspan><tspan x="1250.500" class="v">0.00000</tspan></text>
<text y="491.500"><tspan x="1146" class="g">G01</tspan><tspan x="1174" class="r">X</tspan><tspan x="1184.500" class="v">0.00000</tspan><tspan x="1239" class="r">Y</tspan><tspan x="1250.500" class="v">186.34847</tspan></text>
<text y="503.500" class="c"><tspan x="1147">(Pass: 5)</tspan></text>
<text y="515.500" class="c"><tspan x="1147">(Loop: 1)</tspan></text>
<text y="527.500"><tspan x="1146" class="g">G01</tspan><tspan x="1174" class="r">Z</tspan><tspan x="1184.500" class="v">-4.00000</tspan><tspan x="1246.500" class="f">F100.00</tspan></text>
<text y="539.500"><tspan x="1146" class="g">G01</tspan><tspan x="1174" class="r">X</tspan><tspan x="1184.500" class="v">319.32011</tspan><tspan x="1253" class="r">Y</tspan><tspan x="1263.500" class="v">186.34847</tspan><tspan x="1332.500" class="f">F400.</tspan></text>
<text y="551.500"><tspan x="1146" class="g">G01</tspan><tspan x="1174" class="r">X</tspan><tspan x="1184.500" class="v">319.32011</tspan><tspan x="1253" class="r">Y</tspan><tspan x="1263.500" class="v">0.00000</tspan></text>
<text y="563.500"><tspan x="1146" class="g">G01</tspan><tspan x="1174" class="r">X</tspan><tspan x="1184.500" class="v">0.00000</tspan><tspan x="1239" class="r">Y</tspan><tspan x="1250.500" class="v">0.00000</tspan></text>
<text y="575.500"><tspan x="1146" class="g">G01</tspan><tspan x="1174" class="r">X</tspan><tspan x="1184.500" class="v">0.00000</tspan><tspan x="1239" class="r">Y</tspan><tspan x="1250.500" class="v">186.34847</tspan></text>
<text y="587.500"><tspan x="1146" class="g">G00</tspan><tspan x="1174" class="r">Z</tspan><tspan x="1184.500" class="v">5.00000</tspan></text>
<text y="599.500" class="v"><tspan x="1146">M05</tspan></text>
<text y="611.500" class="c"><tspan x="1146">%</tspan></text>
</g>
<g class="bk">
<text x="1393.500" y="167.500">]</text><text x="1393.500" y="179.500">]</text><text x="1393.500" y="191.500">]</text><text x="1393.500" y="203.500">]</text><text x="1393.500" y="215.500">]</text><text x="1393.500" y="227.500">]</text><text x="1393.500" y="239.500">]</text>
<text x="1393.500" y="275.500">]</text><text x="1393.500" y="287.500">]</text><text x="1393.500" y="299.500">]</text><text x="1393.500" y="311.500">]</text><text x="1393.500" y="323.500">]</text>
<text x="1393.500" y="359.500">]</text><text x="1393.500" y="371.500">]</text><text x="1393.500" y="383.500">]</text><text x="1393.500" y="395.500">]</text><text x="1393.500" y="407.500">]</text>
<text x="1393.500" y="443.500">]</text><text x="1393.500" y="455.500">]</text><text x="1393.500" y="467.500">]</text><text x="1393.500" y="479.500">]</text><text x="1393.500" y="491.500">]</text>
<text x="1393.500" y="527.500">]</text><text x="1393.500" y="539.500">]</text><text x="1393.500" y="551.500">]</text><text x="1393.500" y="563.500">]</text><text x="1393.500" y="575.500">]</text><text x="1393.500" y="587.500">]</text>
</g>

<!-- annotations -->
<rect x="734" y="117" width="201" height="38" fill="#fff"/>
<rect x="733" y="190" width="206" height="40" fill="#fff"/>
<text class="anno" x="735" y="136">Глубина за проход</text>
<text class="anno" x="734" y="209">Конечная глубина</text>
<g fill="none" stroke="#f00" stroke-width="1.400">
<path d="M922 143L1141 268M1105 233L1141 268M1094 262L1141 268"/>
<path d="M905 223L1141 520M1113 461L1141 520M1096 479L1141 520"/>
<path d="M715 178L623 292M673 268L623 292M639 246L623 292"/>
</g>
<path d="M1167 276H1250M1167 531.500H1235" stroke="#e80000" stroke-width="2.500"/>

<!-- status bar -->
<text x="7" y="962" font-size="11.500" fill="#222">0/0</text>
<rect x="32.500" y="948.500" width="99" height="18" rx="2" fill="#fff" stroke="#666"/>
<rect x="1262.500" y="948.500" width="139" height="18" rx="2" fill="#fff" stroke="#666"/>
<g fill="#b8b8ae"><rect x="1413" y="957" width="2" height="2"/><rect x="1409" y="961" width="2" height="2"/><rect x="1413" y="961" width="2" height="2"/><rect x="1405" y="965" width="2" height="2"/><rect x="1409" y="965" width="2" height="2"/><rect x="1413" y="965" width="2" height="2"/></g>
<rect x="0" y="970" width="1422" height="3" fill="#0a53d6"/>
</svg>
</body></html>
